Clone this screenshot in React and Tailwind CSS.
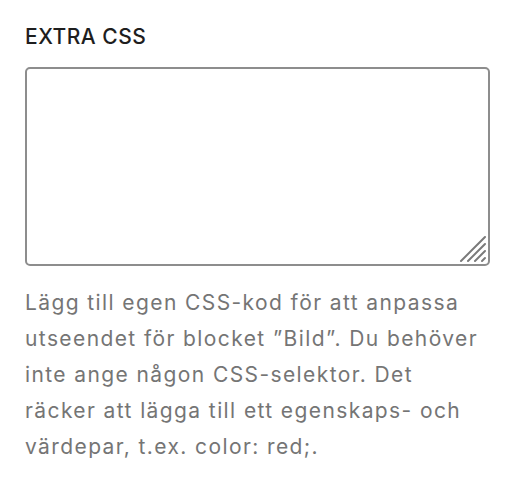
import React from 'react';

// Diagonal grip drawn in the textarea's bottom-right corner
const ResizeGrip = () => (
    <svg className="absolute right-[3px] bottom-[3px]" width="28" height="28" viewBox="0 0 28 28">
        <g stroke="#7a7a7a" strokeWidth="2" strokeLinecap="round">
            <line x1="2" y1="26" x2="26" y2="2" />
            <line x1="9" y1="26" x2="26" y2="9" />
            <line x1="16" y1="26" x2="26" y2="16" />
            <line x1="23" y1="26" x2="26" y2="23" />
        </g>
    </svg>
);

const App = () => {
    return (
        <div className="w-[522px] h-[488px] bg-white pl-[25px] pt-[23px] font-[Inter,sans-serif]">
            <label className="block text-[21px] leading-[28px] font-medium uppercase text-[#1e1e1e] tracking-[0.5px]">
                Extra CSS
            </label>
            <div className="relative mt-[16px] w-[465px] h-[199px]">
                <textarea
                    className="block w-full h-full resize-none border-2 border-[#8d8d8d] rounded-[5px] bg-white outline-none"
                    aria-label="Extra CSS"
                />
                <ResizeGrip />
            </div>
            <p className="mt-[19px] text-[21px] leading-[36px] text-[#757575] tracking-[1.4px]">
                Lägg till egen CSS-kod för att anpassa<br />
                utseendet för blocket ”Bild”. Du behöver<br />
                inte ange någon CSS-selektor. Det<br />
                räcker att lägga till ett egenskaps- och<br />
                värdepar, t.ex. color: red;.
            </p>
        </div>
    );
};

export default App;
